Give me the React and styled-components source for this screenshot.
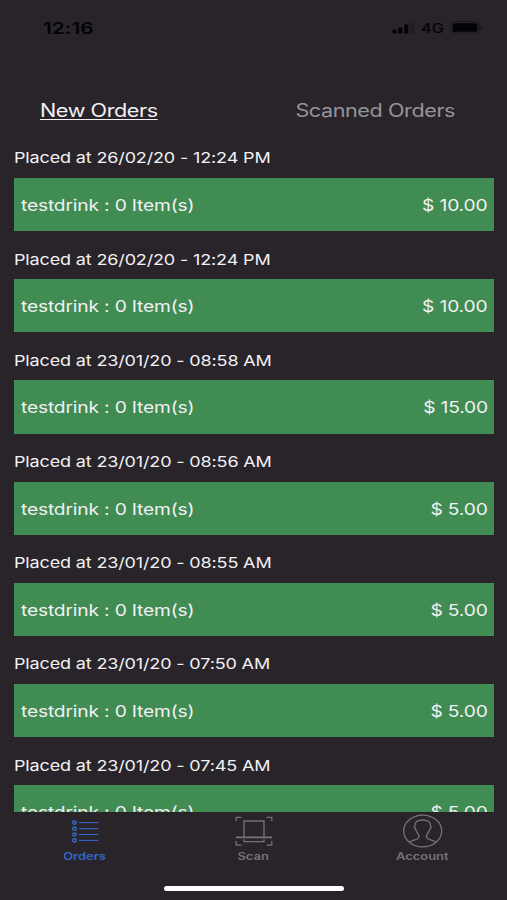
import React from "react";
import styled, { createGlobalStyle } from "styled-components";

const GlobalStyle = createGlobalStyle`
  * { box-sizing: border-box; }
  html, body { margin: 0; background: #28242a; }
`;

const Screen = styled.div`
  width: 507px;
  height: 900px;
  display: flex;
  flex-direction: column;
  overflow: hidden;
  background: #28242a;
  color: #f3f1f4;
  font-family: Inter, "Liberation Sans", sans-serif;
  font-feature-settings: "calt" 0;
`;

/* Wide lettering: glyphs are expanded horizontally from the chosen edge. */
const Wide = styled.span`
  display: block;
  white-space: nowrap;
  transform: scaleX(${(p) => p.$x || 1.2});
  transform-origin: ${(p) => p.$from || "left"} center;
`;

const StatusBar = styled.header`
  flex: none;
  height: 55px;
  padding: 0 24px 0 43px;
  display: flex;
  justify-content: space-between;
  align-items: center;
  color: #030204;
`;

const Clock = styled.div`
  font-size: 16px;
  line-height: 20px;
  font-weight: 600;
`;

const StatusIcons = styled.div`
  display: flex;
  align-items: center;
`;

const Network = styled.div`
  width: 23px;
  margin: 0 6px 0 5px;
  font-size: 13px;
  line-height: 16px;
  font-weight: 500;
`;

const TopTabs = styled.nav`
  flex: none;
  height: 90px;
  padding: 44.6px 52px 0 40px;
  display: flex;
  justify-content: space-between;
`;

const TopTab = styled.div`
  font-size: 18px;
  line-height: 22px;
  height: 22px;
  letter-spacing: -0.35px;
  color: ${(p) => (p.$active ? "#f3f1f4" : "#979498")};
  text-decoration: ${(p) => (p.$active ? "underline" : "none")};
  text-decoration-thickness: 1px;
  text-underline-offset: 2px;
`;

const OrderList = styled.main`
  flex: none;
  height: 666.5px;
  padding: 0 13px 0 14px;
  overflow: hidden;
`;

const Order = styled.section`
  height: 101.2px;
`;

const Placed = styled.div`
  height: 33px;
  padding-top: 3.4px;
  font-size: 15px;
  line-height: 20px;
  letter-spacing: -0.12px;
`;

const OrderCard = styled.div`
  height: 53.2px;
  padding: 1px 6.5px 0 7px;
  display: flex;
  align-items: center;
  justify-content: space-between;
  background: #408c53;
  font-size: 16px;
  line-height: 20px;
  letter-spacing: -0.14px;
`;

const BottomBar = styled.footer`
  flex: 1;
  display: flex;
  flex-direction: column;
  align-items: center;
`;

const BottomTabs = styled.nav`
  width: 100%;
  height: 74.5px;
  display: grid;
  grid-template-columns: repeat(3, 1fr);
`;

const BottomTab = styled.div`
  padding-top: 2.5px;
  display: flex;
  flex-direction: column;
  align-items: center;
  color: ${(p) => (p.$active ? "#3468c4" : "#757278")};
  svg { display: block; }
`;

const TabLabel = styled.div`
  margin-top: 1px;
  font-size: 10px;
  line-height: 14px;
  font-weight: 600;
`;

const HomeIndicator = styled.div`
  width: 180px;
  height: 5px;
  border-radius: 3px;
  background: #fff;
`;

const SignalIcon = () => (
  <svg width="24" height="12" viewBox="0 0 24 12" fill="currentColor">
    <rect x="0.5" y="7.4" width="4" height="4" rx="1" />
    <rect x="6.3" y="5.4" width="4" height="6" rx="1" />
    <rect x="12.3" y="2.6" width="4" height="8.8" rx="1" />
    <rect x="18.2" y="0.4" width="4" height="11" rx="1" opacity="0.2" />
  </svg>
);

const BatteryIcon = () => (
  <svg width="33" height="13" viewBox="0 0 33 13" fill="currentColor">
    <rect x="0.9" y="0.6" width="28.2" height="11.6" rx="3" fill="none" stroke="currentColor" opacity="0.3" />
    <rect x="2.7" y="2.2" width="24.6" height="8.6" rx="1.6" />
    <path d="M30.6 4.4q1.8.6 1.8 2t-1.8 2z" opacity="0.4" />
  </svg>
);

const OrdersIcon = () => (
  <svg width="40" height="34" viewBox="0 0 40 34" fill="none" stroke="currentColor">
    {[8.6, 14.7, 20.5, 26.4].map((y) => (
      <g key={y}>
        <ellipse cx="9.5" cy={y} rx="1.8" ry="1.6" strokeWidth="1.5" />
        <path d={`M14 ${y}H33.3`} strokeWidth="1.1" />
      </g>
    ))}
  </svg>
);

const ScanIcon = () => (
  <svg width="40" height="34" viewBox="0 0 40 34" fill="none" stroke="currentColor" strokeWidth="1.3">
    <path d="M2.2 7.3V3.3H7.5M32.5 3.3h5.3v4M2.2 27v4.2h5.3M32.500 31.200h5.3V27" />
    <path d="M10 23.5V7h20v16.5M10 25.3v2.4h20v-2.4" />
    <path d="M2 23.4h36" strokeWidth="1.7" />
  </svg>
);

const AccountIcon = () => (
  <svg width="40" height="34" viewBox="0 0 40 34" fill="none" stroke="currentColor" strokeWidth="1.3">
    <ellipse cx="19.7" cy="17" rx="19" ry="15.900" />
    <path d="M6 28.200C9 26 14.200 25.800 15.600 23.800C16.200 22.500 15.800 20.800 14.900 19.700C13.700 18.200 13 16.800 12.700 15.300C11.500 14.300 11.300 12.500 12 11.500C11.500 8.300 14.500 6 19.700 6S27.900 8.300 27.400 11.500C28.100 12.500 27.900 14.300 26.700 15.300C26.400 16.800 25.700 18.200 24.500 19.700C23.600 20.800 23.200 22.500 23.800 23.800C25.200 25.800 30.400 26 33.400 28.200" />
  </svg>
);

const orders = [
  ["26/02/20 - 12:24 PM", "10.00"],
  ["26/02/20 - 12:24 PM", "10.00"],
  ["23/01/20 - 08:58 AM", "15.00"],
  ["23/01/20 - 08:56 AM", "5.00"],
  ["23/01/20 - 08:55 AM", "5.00"],
  ["23/01/20 - 07:50 AM", "5.00"],
  ["23/01/20 - 07:45 AM", "5.00"],
];

export default function App() {
  return (
    <Screen>
      <GlobalStyle />
      <StatusBar>
        <Clock><Wide $x={1.3}>12:16</Wide></Clock>
        <StatusIcons>
          <SignalIcon />
          <Network><Wide $x={1.25}>4G</Wide></Network>
          <BatteryIcon />
        </StatusIcons>
      </StatusBar>
      <TopTabs>
        <TopTab $active><Wide>New Orders</Wide></TopTab>
        <TopTab><Wide $from="right">Scanned Orders</Wide></TopTab>
      </TopTabs>
      <OrderList>
        {orders.map(([time, price], i) => (
          <Order key={i}>
            <Placed><Wide>Placed at {time}</Wide></Placed>
            <OrderCard>
              <Wide>testdrink : 0 Item(s)</Wide>
              <Wide $from="right">$ {price}</Wide>
            </OrderCard>
          </Order>
        ))}
      </OrderList>
      <BottomBar>
        <BottomTabs>
          <BottomTab $active>
            <OrdersIcon />
            <TabLabel><Wide $from="center" $x={1.29}>Orders</Wide></TabLabel>
          </BottomTab>
          <BottomTab>
            <ScanIcon />
            <TabLabel><Wide $from="center" $x={1.29}>Scan</Wide></TabLabel>
          </BottomTab>
          <BottomTab>
            <AccountIcon />
            <TabLabel><Wide $from="center" $x={1.29}>Account</Wide></TabLabel>
          </BottomTab>
        </BottomTabs>
        <HomeIndicator />
      </BottomBar>
    </Screen>
  );
}
